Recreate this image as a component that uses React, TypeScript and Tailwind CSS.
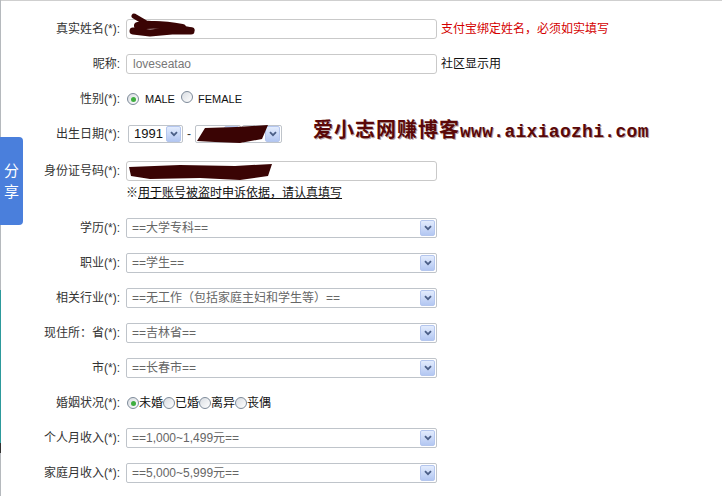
import type { ReactNode } from 'react'

const cjk = "font-['Liberation_Sans','Noto_Sans_CJK_SC',sans-serif]"

// chevron inside the blue arrow button of an XP-style select
const ArrowBox = () => (
  <div className="ml-auto mr-px flex h-[16px] w-[15px] shrink-0 items-center justify-center rounded-[2px] border border-[#b4c6ee] bg-gradient-to-b from-[#e3ecfd] to-[#b3c7f2]">
    <svg width="8" height="6" viewBox="0 0 8 6">
      <path d="M1 1.2 L4 4.2 L7 1.2" fill="none" stroke="#4b5f87" strokeWidth="1.8" />
    </svg>
  </div>
)

const Select = ({ value, w = 'w-[311px]', h = 'h-[20px]', dark = false }: { value: string; w?: string; h?: string; dark?: boolean }) => (
  <div className={`${w} ${h} flex items-center rounded-[2px] border border-[#bfc4ca] bg-white pl-[5px] text-[12px] ${dark ? 'text-[#111] text-[13px]' : 'text-[#666]'}`}>
    <span className="whitespace-nowrap">{value}</span>
    <ArrowBox />
  </div>
)

const Input = ({ value = '' }: { value?: string }) => (
  <div className="flex h-[20px] w-[311px] items-center rounded-[3px] border border-[#c9c9c9] bg-white px-[6px] text-[12px] text-[#777]">
    {value}
  </div>
)

const Radio = ({ checked = false }: { checked?: boolean }) => (
  <span className="inline-flex h-[12px] w-[12px] shrink-0 items-center justify-center rounded-full border border-[#7d8a99] bg-gradient-to-br from-[#d9dde2] to-white">
    {checked && <span className="h-[5px] w-[5px] rounded-full bg-[#3fae3f]" />}
  </span>
)

const Row = ({ label, children, className = '' }: { label: string; children: ReactNode; className?: string }) => (
  <div className={`flex items-center ${className}`}>
    <div className="w-[120px] shrink-0 whitespace-nowrap text-right text-[12px] text-[#333]">{label}</div>
    <div className="ml-[6px] flex items-center">{children}</div>
  </div>
)

export default function App() {
  return (
    <div className={`relative flex h-[496px] w-[722px] overflow-hidden bg-white ${cjk}`}>
      {/* left window edge */}
      <div className="flex w-px shrink-0 flex-col">
        <div className="h-[290px] bg-[#b5b9bd]" />
        <div className="h-[153px] bg-[#2d9a9c]" />
        <div className="h-[10px] bg-[#333]" />
        <div className="flex-1 bg-[#b5b9bd]" />
      </div>

      <div className="flex flex-1 flex-col border-t border-[#cfcfcf] pt-[18px]">
        <div className="-ml-px flex flex-col gap-[15px]">
          <Row label="真实姓名(*):">
            <Input />
            <span className="ml-[4px] whitespace-nowrap text-[12px] text-[#d40000]">支付宝绑定姓名，必须如实填写</span>
          </Row>
          <Row label="昵称:">
            <Input value="loveseatao" />
            <span className="ml-[4px] whitespace-nowrap text-[12px] text-[#111]">社区显示用</span>
          </Row>
          <Row label="性别(*):" className="h-[20px]">
            <div className="flex items-center pl-px text-[11px] text-[#111]">
              <Radio checked />
              <span className="ml-[6px]">MALE</span>
              <span className="ml-[6px]"><Radio /></span>
              <span className="ml-[5px]">FEMALE</span>
            </div>
          </Row>
          <Row label="出生日期(*):" className="h-[20px]">
            <div className="ml-[2px] flex items-center">
              <Select value="1991" w="w-[55px]" h="h-[18px]" dark />
              <span className="mx-[4px] text-[12px] text-[#333]">-</span>
              <Select value="" w="w-[46px]" h="h-[18px]" />
              <div className="ml-px">
                <Select value="" w="w-[40px]" h="h-[18px]" />
              </div>
            </div>
          </Row>
          <div className="mt-[2px] flex h-[42px] flex-col">
            <Row label="身份证号码(*):">
              <Input />
            </Row>
            <div className="ml-[126px] mt-[3px] flex h-[18px] items-center text-[12px] text-[#111]">
              <span>※</span>
              <span className="underline">用于账号被盗时申诉依据，请认真填写</span>
            </div>
          </div>
          <Row label="学历(*):">
            <Select value="==大学专科==" />
          </Row>
          <Row label="职业(*):">
            <Select value="==学生==" />
          </Row>
          <Row label="相关行业(*):">
            <Select value="==无工作（包括家庭主妇和学生等）==" />
          </Row>
          <Row label="现住所：省(*):">
            <Select value="==吉林省==" />
          </Row>
          <Row label="市(*):">
            <Select value="==长春市==" />
          </Row>
          <Row label="婚姻状况(*):" className="h-[20px]">
            <div className="flex items-center pl-px text-[12px] text-[#111]">
              <Radio checked />
              <span>未婚</span>
              <Radio />
              <span>已婚</span>
              <Radio />
              <span>离异</span>
              <Radio />
              <span>丧偶</span>
            </div>
          </Row>
          <Row label="个人月收入(*):">
            <Select value="==1,000~1,499元==" />
          </Row>
          <Row label="家庭月收入(*):">
            <Select value="==5,000~5,999元==" />
          </Row>
        </div>
      </div>

      {/* floating share tab */}
      <div className="absolute left-0 top-[137px] flex h-[88px] w-[23px] flex-col items-center justify-center gap-[6px] rounded-r-[4px] bg-[#4a7fdc] text-[15px] leading-none text-white">
        <span>分</span>
        <span>享</span>
      </div>

      {/* watermark */}
      <div className="absolute left-[313px] top-[114px] flex items-baseline whitespace-nowrap text-[#5a0808] [text-shadow:1px_1px_0_#b9a3a3]">
        <span className="font-['Noto_Sans_CJK_SC',serif] text-[20px] font-semibold tracking-[1px]">爱小志网赚博客</span>
        <span className="font-['Liberation_Mono',monospace] text-[18px] font-bold tracking-[0.3px]">www.aixiaozhi.com</span>
      </div>

      {/* redaction scribbles */}
      <svg className="pointer-events-none absolute left-0 top-0" width="722" height="496" viewBox="0 0 722 496">
        <g fill="none" stroke="#3a0404" strokeLinecap="round" strokeLinejoin="round">
          <path d="M134 16 L146 23 L166 25 L192 30" strokeWidth="5" />
          <path d="M133 31 L150 33 L172 31 L191 31" strokeWidth="7" />
          <path d="M138 26 Q158 23 182 28" strokeWidth="8" />
        </g>
        <path d="M197 141 L205 128 L236 127 L268 125 L262 139 L240 143 L215 142 Z" fill="#3a0404" />
        <path d="M129 167 L180 165 L235 166 L272 164 L268 176 L240 180 L200 178 L150 179 L131 176 Z" fill="#3a0404" />
      </svg>
    </div>
  )
}
